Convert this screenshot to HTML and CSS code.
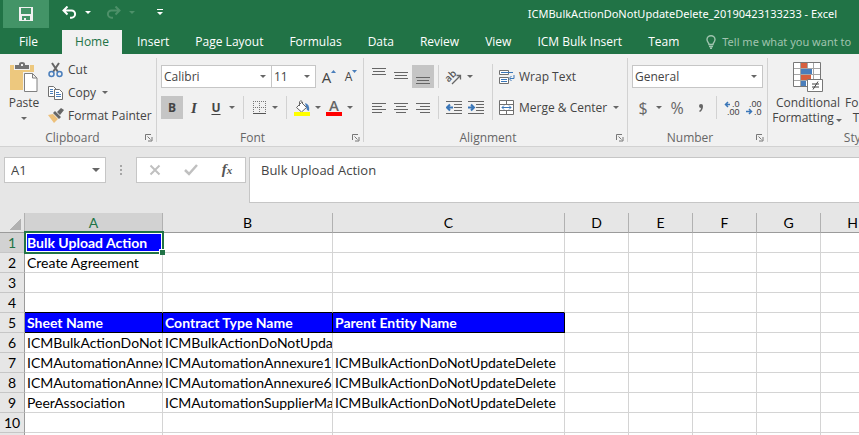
FILE: index.html
```
<!DOCTYPE html>
<html lang="en">
<head>
    <meta charset="UTF-8">
    <meta name="viewport" content="width=device-width, initial-scale=1.0">
    <title>ICMBulkActionDoNotUpdateDelete_20190423133233 - Excel</title>
    <link rel="stylesheet" href="styles.css">
</head>

<body>
<svg class="sprite" width="0" height="0" aria-hidden="true">
    <symbol id="launcher" viewBox="0 0 8 8">
        <path d="M0.5 6V0.5H6M2.5 2.5l3 3M7 3v4H3" fill="none" stroke="#777"/>
    </symbol>
</svg>

<header class="titlebar">
    <div class="quick">
        <button class="quick__save" aria-label="Save">
            <svg width="14" height="14" viewBox="0 0 14 14"><path fill="#f1f1f1" fill-rule="evenodd" d="M0 0h14v14H0zM2 1v6h10V1zM3 9v4h2v-2h2v2h4V9z"/></svg>
        </button>
        <button class="quick__undo" aria-label="Undo">
            <svg width="15" height="13" viewBox="0 0 15 13"><path d="M1.500 4.500H9.500a3.500 3.500 0 0 1 0 7.200H8M5.500 0.500L1.500 4.500l4 4" fill="none" stroke="#fff" stroke-width="2"/></svg>
        </button>
        <button class="arrow arrow--light" aria-label="Undo list"></button>
        <button class="quick__undo" aria-label="Redo" disabled>
            <svg width="15" height="13" viewBox="0 0 15 13"><path d="M13.500 4.500H5.500a3.500 3.500 0 0 0 0 7.200H7M9.500 0.500l4 4l-4 4" fill="none" stroke="#4d9069" stroke-width="2"/></svg>
        </button>
        <button class="arrow arrow--dim" aria-label="Redo list" disabled></button>
        <button class="quick__more" aria-label="Customize toolbar">
            <svg width="6" height="7" viewBox="0 0 6 7"><path fill="#fff" d="M0 0h6v1H0zM0 3h6L3 6z"/></svg>
        </button>
    </div>
    <div class="titlebar__name">ICMBulkActionDoNotUpdateDelete_20190423133233 - Excel</div>
</header>

<nav class="tabs">
    <a class="tab tab--file" href="#">File</a>
    <a class="tab tab--active" href="#">Home</a>
    <a class="tab" href="#">Insert</a>
    <a class="tab" href="#">Page Layout</a>
    <a class="tab" href="#">Formulas</a>
    <a class="tab" href="#">Data</a>
    <a class="tab" href="#">Review</a>
    <a class="tab" href="#">View</a>
    <a class="tab" href="#">ICM Bulk Insert</a>
    <a class="tab" href="#">Team</a>
    <a class="tell" href="#">
        <svg width="10" height="14" viewBox="0 0 10 14"><path d="M3 9.500C3 7.500 1 7 1 4.500a4 3.700 0 0 1 8 0C9 7 7 7.500 7 9.500zM3 11.500h4M4 13.300h2" fill="none" stroke="#a0c4af" stroke-width="1.400"/></svg>
        <span>Tell me what you want to</span>
    </a>
</nav>

<div class="ribbon">
    <section class="group group--clipboard">
        <div class="group__body">
            <button class="big">
                <svg width="28" height="30" viewBox="0 0 28 30">
                    <path fill="#edc87e" d="M0 3h24v25H0z"/>
                    <path fill="#f1f1f1" d="M4 2h16v6H4z"/>
                    <path fill="#737373" d="M5 3h4V2q0-2 3-2t3 2v1h4v4H5zM11 2v2h2V2z" fill-rule="evenodd"/>
                    <path fill="#f1f1f1" d="M13 10h15v20H13z"/>
                    <path d="M14.500 11.500h8l4.500 4.500v13.500H14.500zM22.500 11.500V16H27" fill="#fff" stroke="#808080"/>
                </svg>
                <span>Paste</span>
                <i class="arrow"></i>
            </button>
            <div class="stack">
                <button class="item">
                    <svg width="16" height="16" viewBox="0 0 16 16">
                        <path d="M4 1l6 9M11 1L5 10" fill="none" stroke="#666" stroke-width="2"/>
                        <circle cx="3.500" cy="12" r="2.500" fill="none" stroke="#4a7ebb" stroke-width="1.500"/>
                        <circle cx="11.500" cy="12" r="2.500" fill="none" stroke="#4a7ebb" stroke-width="1.500"/>
                    </svg>
                    Cut
                </button>
                <button class="item">
                    <svg width="16" height="16" viewBox="0 0 16 16">
                        <path d="M0.500 1.500h5l3 3v7h-8z" fill="#fff" stroke="#707070"/>
                        <path d="M6.500 4.500h5l3 3v7h-8z" fill="#fff" stroke="#707070"/>
                        <path d="M2 4.500h3M2 6.500h3M2 8.500h3M8 7.500h3M8 9.500h5M8 11.500h5" stroke="#4a7ebb"/>
                    </svg>
                    Copy
                    <i class="arrow"></i>
                </button>
                <button class="item">
                    <svg width="16" height="16" viewBox="0 0 16 16">
                        <path fill="#edc07a" d="M0 7l5-1 5 5-4 4z"/>
                        <path fill="#666" d="M5 5l2-2 6 6-2 2zM9 4l4-4 3 2-4 5z"/>
                    </svg>
                    Format Painter
                </button>
            </div>
        </div>
        <h2 class="group__label">Clipboard</h2>
        <button class="launcher" aria-label="Clipboard settings"><svg width="8" height="8"><use href="#launcher"/></svg></button>
    </section>

    <section class="group group--font">
        <div class="group__body group__body--rows">
            <div class="row">
                <label class="pick pick--font"><select aria-label="Font"><option>Calibri</option></select><i class="arrow"></i></label>
                <label class="pick pick--size"><select aria-label="Font size"><option>11</option></select><i class="arrow"></i></label>
                <button class="tool" aria-label="Increase font size">
                    <span class="grow">A</span><svg width="5" height="14" viewBox="0 0 5 14"><path fill="#4a7ebb" d="M0 3L2.500 0L5 3z"/></svg>
                </button>
                <button class="tool" aria-label="Decrease font size">
                    <span class="shrink">A</span><svg width="5" height="14" viewBox="0 0 5 14"><path fill="#4a7ebb" d="M0 0h5L2.500 3z"/></svg>
                </button>
            </div>
            <div class="row">
                <button class="tool tool--on"><b>B</b></button>
                <button class="tool tool--italic">I</button>
                <button class="tool"><b class="underlined">U</b></button>
                <button class="arrow" aria-label="Underline styles"></button>
                <i class="sep"></i>
                <button class="tool" aria-label="Borders">
                    <svg width="13" height="13" viewBox="0 0 13 13"><path d="M0 0.500h13M0 6.500h13M0.500 0v12M6.500 0v12M12.500 0v12" fill="none" stroke="#777" stroke-dasharray="1 1"/><path d="M0 12.500h13" stroke="#555"/></svg>
                </button>
                <button class="arrow" aria-label="Border styles"></button>
                <i class="sep"></i>
                <button class="tool" aria-label="Fill color">
                    <svg width="16" height="16" viewBox="0 0 16 16"><path fill="#4a7ebb" d="M11 3q5 1 4 8l-2-1z"/><path d="M2.500 7.500l5-5 5 5-5 4.500zM5.500 6V2q1-3 3 0v2" fill="#fff" stroke="#666"/><path fill="#ff0" d="M0 12h16v4H0z"/></svg>
                </button>
                <button class="arrow" aria-label="Fill colors"></button>
                <button class="tool" aria-label="Font color"><span class="fontcolor">A</span></button>
                <button class="arrow" aria-label="Font colors"></button>
            </div>
        </div>
        <h2 class="group__label">Font</h2>
        <button class="launcher" aria-label="Font settings"><svg width="8" height="8"><use href="#launcher"/></svg></button>
    </section>

    <section class="group group--alignment">
        <div class="group__body">
            <div class="align">
                <div class="row">
                    <button class="tool" aria-label="Top align"><svg width="14" height="23" viewBox="0 0 14 23"><path d="M0 3.500h14M1 6.500h12M0 9.500h14" stroke="#666"/></svg></button>
                    <button class="tool" aria-label="Middle align"><svg width="14" height="23" viewBox="0 0 14 23"><path d="M0 7.500h14M1 10.500h12M0 13.500h14" stroke="#666"/></svg></button>
                    <button class="tool tool--on" aria-label="Bottom align"><svg width="14" height="23" viewBox="0 0 14 23"><path d="M0 12.500h14M1 15.500h12M0 18.500h14" stroke="#666"/></svg></button>
                    <i class="sep sep--even"></i>
                    <button class="tool" aria-label="Orientation">
                        <svg width="18" height="16" viewBox="0 0 18 16"><text class="ab" x="0" y="11" transform="rotate(-45 5 8)">ab</text><path d="M7 15l8-8M11.500 6.500h4v4" fill="none" stroke="#666" stroke-width="1.300"/></svg>
                    </button>
                    <button class="arrow" aria-label="Orientations"></button>
                </div>
                <div class="row">
                    <button class="tool" aria-label="Align left"><svg width="14" height="12" viewBox="0 0 14 12"><path d="M0 1.500h14M0 4.500h10M0 7.500h14M0 10.500h10" stroke="#666"/></svg></button>
                    <button class="tool" aria-label="Center"><svg width="14" height="12" viewBox="0 0 14 12"><path d="M0 1.500h14M2 4.500h10M0 7.500h14M2 10.500h10" stroke="#666"/></svg></button>
                    <button class="tool" aria-label="Align right"><svg width="14" height="12" viewBox="0 0 14 12"><path d="M0 1.500h14M4 4.500h10M0 7.500h14M4 10.500h10" stroke="#666"/></svg></button>
                    <i class="sep sep--even"></i>
                    <button class="tool" aria-label="Decrease indent"><svg width="16" height="14" viewBox="0 0 16 14"><path d="M0 0.500h16M8 3.500h8M8 6.500h8M8 9.500h8M0 12.500h16" stroke="#666"/><path d="M1 6.500h6M4 3.500l-3 3 3 3" fill="none" stroke="#3a76b8" stroke-width="2"/></svg></button>
                    <button class="tool" aria-label="Increase indent"><svg width="16" height="14" viewBox="0 0 16 14"><path d="M0 0.500h16M8 3.500h8M8 6.500h8M8 9.500h8M0 12.500h16" stroke="#666"/><path d="M0 6.500h6M3 3.500l3 3-3 3" fill="none" stroke="#3a76b8" stroke-width="2"/></svg></button>
                </div>
            </div>
            <div class="wrapping">
                <button class="item">
                    <svg width="16" height="16" viewBox="0 0 16 16"><path d="M0.500 1.500h9v4h-9zM0.500 8.500h9v6h-9z" fill="#fff" stroke="#707070"/><path d="M2 3.500h12M2 10.500h6M2 12.500h6M15 6v3.500h-4M12.500 7l-2.500 2.500 2.500 2.500" fill="none" stroke="#3a76b8"/></svg>
                    Wrap Text
                </button>
                <button class="item">
                    <svg width="16" height="16" viewBox="0 0 16 16"><path d="M0.500 0.500h14v14h-14zM0.500 4.500h14M0.500 10.500h14M7.500 0v4M7.500 11v4" fill="#fff" stroke="#707070"/><path d="M3 7.500h9M5 5.500l-2 2 2 2M10 5.500l2 2-2 2" fill="none" stroke="#3a76b8"/></svg>
                    Merge &amp; Center
                    <i class="arrow"></i>
                </button>
            </div>
        </div>
        <h2 class="group__label">Alignment</h2>
        <button class="launcher" aria-label="Alignment settings"><svg width="8" height="8"><use href="#launcher"/></svg></button>
    </section>

    <section class="group group--number">
        <div class="group__body group__body--rows">
            <div class="row">
                <label class="pick pick--format"><select aria-label="Number format"><option>General</option></select><i class="arrow"></i></label>
            </div>
            <div class="row">
                <button class="tool tool--sign">$</button>
                <button class="arrow" aria-label="Currencies"></button>
                <button class="tool tool--sign tool--percent">%</button>
                <button class="tool" aria-label="Comma style"><svg width="6" height="8" viewBox="0 0 6 8"><path fill="#666" d="M1 2a2 2 0 0 1 4 0q0 4-3 6l-1-1q2-1 2-3Q1 4 1 2z"/></svg></button>
                <i class="sep sep--even"></i>
                <button class="tool decimals" aria-label="Increase decimal">
                    <svg width="16" height="16" viewBox="0 0 16 16"><path d="M1 4.500h5M4 2L1.500 4.500L4 7" fill="none" stroke="#3a76b8" stroke-width="1.500"/><text x="8" y="7">.0</text><text x="3" y="15">.00</text></svg>
                </button>
                <button class="tool decimals" aria-label="Decrease decimal">
                    <svg width="16" height="16" viewBox="0 0 16 16"><path d="M0 11.500h5M3 9l2.500 2.500L3 14" fill="none" stroke="#3a76b8" stroke-width="1.500"/><text x="3" y="7">.00</text><text x="8" y="15">.0</text></svg>
                </button>
            </div>
        </div>
        <h2 class="group__label">Number</h2>
        <button class="launcher" aria-label="Number settings"><svg width="8" height="8"><use href="#launcher"/></svg></button>
    </section>

    <section class="group group--styles">
        <div class="group__body">
            <button class="big big--conditional">
                <svg width="30" height="30" viewBox="0 0 30 30">
                    <path fill="#fff" d="M0 0h28v25H0z"/>
                    <path fill="#d65f3e" d="M8 1h6v5H8zM8 13h10v5H8z"/>
                    <path fill="#4a7ebb" d="M8 7h11v5H8zM8 19h5v5H8z"/>
                    <path d="M7.500 0v25M14.500 0v7M14.500 18v7M20.500 0v25M0 6.500h28M0 12.500h28M0 18.500h28" stroke="#a6a6a6" fill="none"/>
                    <path d="M0.500 0.500h27v24h-27z" stroke="#777" fill="none"/>
                    <path d="M14.500 17.500h15v12h-15z" fill="#fff" stroke="#777"/>
                    <path d="M19 22h7M19 25h7M25 19.500l-5 8" stroke="#444" fill="none"/>
                </svg>
                <span>Conditional<br>Formatting<i class="arrow"></i></span>
            </button>
            <button class="big big--table">
                <span>Format as<br>Table<i class="arrow"></i></span>
            </button>
        </div>
        <h2 class="group__label">Styles</h2>
    </section>
</div>

<div class="formula">
    <label class="namebox"><input type="text" value="A1" aria-label="Name box"><i class="arrow"></i></label>
    <i class="grip"></i>
    <div class="formula__buttons">
        <button aria-label="Cancel"><svg width="12" height="12" viewBox="0 0 12 12"><path d="M1.500 1.500l9 9M10.500 1.500l-9 9" stroke="#c0c0c0" stroke-width="2"/></svg></button>
        <button aria-label="Enter"><svg width="14" height="12" viewBox="0 0 14 12"><path d="M1 6l4 4 8-9" fill="none" stroke="#c0c0c0" stroke-width="2.500"/></svg></button>
        <button class="fx" aria-label="Insert function">f<sub>x</sub></button>
    </div>
    <textarea class="formula__text" aria-label="Formula bar">Bulk Upload Action</textarea>
</div>

<table class="sheet">
    <colgroup>
        <col class="col-head"><col class="col-a"><col class="col-b"><col class="col-c">
        <col class="col"><col class="col"><col class="col"><col class="col"><col class="col">
    </colgroup>
    <thead>
    <tr><th class="corner"></th><th class="is-selected">A</th><th>B</th><th>C</th><th>D</th><th>E</th><th>F</th><th>G</th><th>H</th></tr>
    </thead>
    <tbody>
    <tr><th class="is-selected">1</th><td class="filled current">Bulk Upload Action</td><td></td><td></td><td></td><td></td><td></td><td></td><td></td></tr>
    <tr><th>2</th><td>Create Agreement</td><td></td><td></td><td></td><td></td><td></td><td></td><td></td></tr>
    <tr><th>3</th><td></td><td></td><td></td><td></td><td></td><td></td><td></td><td></td></tr>
    <tr class="above"><th>4</th><td></td><td></td><td></td><td></td><td></td><td></td><td></td><td></td></tr>
    <tr><th>5</th><td class="filled boxed">Sheet Name</td><td class="filled boxed">Contract Type Name</td><td class="filled boxed">Parent Entity Name</td><td></td><td></td><td></td><td></td><td></td></tr>
    <tr><th>6</th><td>ICMBulkActionDoNotU</td><td>ICMBulkActionDoNotUpdat</td><td></td><td></td><td></td><td></td><td></td><td></td></tr>
    <tr><th>7</th><td>ICMAutomationAnnex</td><td>ICMAutomationAnnexure1_</td><td>ICMBulkActionDoNotUpdateDelete</td><td></td><td></td><td></td><td></td><td></td></tr>
    <tr><th>8</th><td>ICMAutomationAnnex</td><td>ICMAutomationAnnexure6_</td><td>ICMBulkActionDoNotUpdateDelete</td><td></td><td></td><td></td><td></td><td></td></tr>
    <tr><th>9</th><td>PeerAssociation</td><td>ICMAutomationSupplierMa</td><td>ICMBulkActionDoNotUpdateDelete</td><td></td><td></td><td></td><td></td><td></td></tr>
    <tr><th>10</th><td></td><td></td><td></td><td></td><td></td><td></td><td></td><td></td></tr>
    <tr><th></th><td></td><td></td><td></td><td></td><td></td><td></td><td></td><td></td></tr>
    </tbody>
</table>
</body>
</html>
```
FILE: styles.css
```
*,
*::before,
*::after {
    box-sizing: border-box;
}

body {
    margin: 0;
    height: 100vh;
    overflow: hidden;
    background-color: #e6e6e6;
    color: #444;
    font-family: "Open Sans", sans-serif;
    font-size: 12px;
    line-height: 16px;
}

button,
select,
input,
textarea {
    margin: 0;
    padding: 0;
    border: 0;
    border-radius: 0;
    background: none;
    color: inherit;
    font: inherit;
}

a {
    color: inherit;
    text-decoration: none;
}

svg {
    display: block;
    flex: none;
}

.sprite {
    position: absolute;
}

/* small drop-down triangle */
.arrow {
    display: flex;
    flex: none;
    align-items: center;
    justify-content: center;
    width: 10px;
    color: #666;
}

.arrow::before {
    content: "";
    border: 3px solid transparent;
    border-top-color: currentColor;
    border-bottom: 0;
}

.arrow--light {
    color: #fff;
}

.arrow--dim {
    color: #4d9069;
}

/* title bar */
.titlebar {
    display: flex;
    justify-content: space-between;
    height: 28px;
    padding: 0 22px 0 3px;
    background-color: #217346;
    color: #fff;
}

.titlebar__name {
    font-family: "Noto Sans", sans-serif;
    font-size: 11px;
    line-height: 28px;
    white-space: nowrap;
}

.quick {
    display: flex;
}

.quick button {
    display: flex;
    align-items: center;
    justify-content: center;
    height: 24px;
}

.quick .quick__save {
    width: 46px;
    height: 28px;
    background-color: #439467;
}

.quick__undo {
    width: 28px;
    margin-left: 6px;
}

.quick__more {
    width: 46px;
}

/* tabs */
.tabs {
    display: flex;
    height: 26px;
    padding-top: 2px;
    overflow: hidden;
    background-color: #217346;
    color: #fff;
    line-height: 24px;
    white-space: nowrap;
}

.tab {
    flex: none;
    padding: 0 13px;
}

.tab--file {
    width: 62px;
    padding: 0 0 0 19px;
}

.tab--active {
    width: 60px;
    margin-right: 2px;
    padding: 0;
    background-color: #f1f1f1;
    color: #217346;
    text-align: center;
}

.tell {
    display: flex;
    flex: none;
    align-items: center;
    gap: 6px;
    padding-left: 14px;
    color: #a0c4af;
    font-family: "Noto Sans", sans-serif;
    font-size: 11px;
}

/* ribbon */
.ribbon {
    display: flex;
    overflow: hidden;
    border-bottom: 1px solid #d2d2d2;
    background-color: #f1f1f1;
}

.group {
    position: relative;
    flex: none;
    padding-top: 4px;
}

.group::after {
    content: "";
    position: absolute;
    top: 4px;
    right: 0;
    bottom: 4px;
    border-right: 1px solid #d2d2d2;
}

.group__body {
    display: flex;
    height: 72px;
}

.group__body--rows,
.align,
.wrapping {
    display: flex;
    flex-direction: column;
    gap: 8px;
    padding-top: 7px;
}

.group__label {
    margin: 0;
    color: #666;
    font-size: 12px;
    font-weight: 400;
    line-height: 16px;
    text-align: center;
}

.group--clipboard {
    width: 157px;
    padding-right: 18px;
    padding-left: 6px;
}

.group--font {
    width: 207px;
    padding-left: 4px;
}

.group--font .group__label,
.group--alignment .group__label,
.group--number .group__label {
    padding-right: 20px;
}

.group--alignment {
    width: 264px;
    padding-left: 4px;
}

.group--number {
    width: 140px;
    padding-left: 4px;
}

.group--styles {
    width: 180px;
    padding-left: 4px;
}

.launcher {
    position: absolute;
    right: 4px;
    bottom: 4px;
}

.row {
    display: flex;
    height: 23px;
}

.tool {
    display: flex;
    flex: none;
    align-items: center;
    justify-content: center;
    width: 22px;
    height: 23px;
}

.tool--on {
    background-color: #c5c5c5;
}

.tool--italic {
    font-family: "Liberation Serif", serif;
    font-size: 15px;
    font-style: italic;
    font-weight: 700;
}

.tool--sign {
    color: #666;
    font-size: 16px;
}

.tool--percent {
    width: 26px;
}

.underlined {
    text-decoration: underline;
    text-underline-offset: 2px;
}

.grow {
    font-size: 15px;
}

.shrink {
    font-size: 12px;
}

.fontcolor {
    width: 16px;
    border-bottom: 4px solid #f00;
    color: #666;
    font-size: 15px;
    font-weight: 600;
    line-height: 13px;
}

.ab {
    fill: #555;
    font-size: 10px;
    font-weight: 600;
}

.decimals text {
    fill: #444;
    font-family: "Liberation Sans", sans-serif;
    font-size: 9px;
}

.sep {
    flex: none;
    width: 1px;
    margin: 0 4px 0 6px;
    background-color: #d2d2d2;
}

.sep--even {
    margin: 0 4px;
}

.item {
    display: flex;
    align-items: center;
    gap: 4px;
    height: 23px;
    white-space: nowrap;
}

.big {
    display: flex;
    flex: none;
    flex-direction: column;
    align-items: center;
    width: 36px;
    padding-top: 4px;
}

.big > svg {
    margin-bottom: 3px;
}

.big .arrow {
    height: 14px;
}

.big span .arrow {
    display: inline-flex;
    height: 8px;
}

.big--conditional,
.big--table {
    line-height: 15px;
    white-space: nowrap;
}

.big--conditional {
    width: 72px;
}

.big--table {
    width: 58px;
    padding-top: 37px;
}

.stack {
    padding-left: 6px;
}

.align {
    width: 124px;
}

.wrapping {
    position: relative;
    padding-left: 7px;
}

.wrapping::before {
    content: "";
    position: absolute;
    top: 6px;
    bottom: 10px;
    left: 0;
    border-left: 1px solid #d2d2d2;
}

.pick,
.namebox {
    display: flex;
    flex: none;
    height: 23px;
    padding-right: 3px;
    border: 1px solid #c6c6c6;
    background-color: #fff;
}

.pick select {
    flex: 1;
    min-width: 0;
    padding-left: 2px;
    appearance: none;
}

.pick--font {
    width: 111px;
}

.pick--size {
    width: 44px;
    margin-right: 2px;
    border-left: 0;
}

.pick--format {
    width: 131px;
}

/* formula bar */
.formula {
    display: flex;
    padding: 10px 0 10px 4px;
    font-size: 13px;
}

.namebox {
    width: 102px;
    height: 26px;
    padding-right: 4px;
}

.namebox .arrow::before {
    border-width: 4px;
    border-bottom: 0;
}

.namebox input {
    flex: 1;
    min-width: 0;
    padding-left: 6px;
}

.grip {
    width: 2px;
    height: 10px;
    margin: 8px 14px;
    background: repeating-linear-gradient(#a6a6a6 0 2px, transparent 2px 4px);
}

.formula__buttons {
    display: flex;
    flex: none;
    width: 110px;
    height: 26px;
    border: 1px solid #c6c6c6;
    background-color: #fff;
}

.formula__buttons button {
    display: flex;
    flex: 1;
    align-items: center;
    justify-content: center;
}

.formula__buttons .fx {
    align-items: baseline;
    color: #555;
    font-family: "Liberation Serif", serif;
    font-size: 15px;
    font-style: italic;
    font-weight: 700;
    line-height: 22px;
}

.fx sub {
    font-size: 11px;
    line-height: 0;
}

.formula__text {
    flex: 1;
    height: 46px;
    margin-left: 3px;
    padding: 4px 11px;
    border: 1px solid #c6c6c6;
    border-right: 0;
    background-color: #fff;
    resize: none;
}

/* worksheet */
.sheet {
    width: 885px;
    border-spacing: 0;
    table-layout: fixed;
    background-color: #fff;
    color: #000;
    font-family: Lato, sans-serif;
    font-size: 14px;
    line-height: 19px;
}

.col-head {
    width: 25px;
}

.col-a {
    width: 138px;
}

.col-b {
    width: 170px;
}

.col-c {
    width: 232px;
}

.col {
    width: 64px;
}

.sheet th {
    height: 20px;
    padding: 0;
    border-right: 1px solid #9b9b9b;
    border-bottom: 1px solid #c6c6c6;
    background-color: #e6e6e6;
    font-weight: 400;
}

.sheet thead th {
    border-right-color: #b1b1b1;
    border-bottom-color: #9b9b9b;
}

.sheet th.is-selected {
    background-color: #d2d2d2;
    color: #217346;
}

.sheet .corner {
    background: linear-gradient(135deg, transparent 50%, #b1b1b1 50%) 9px 5px / 12px 12px no-repeat #e6e6e6;
}

.sheet td {
    height: 20px;
    padding: 0 0 0 2px;
    overflow: hidden;
    border-right: 1px solid #d4d4d4;
    border-bottom: 1px solid #d4d4d4;
    white-space: nowrap;
}

.sheet .filled {
    background-color: #00f;
    color: #fff;
    font-weight: 700;
}

.sheet .boxed {
    border-color: #000;
}

.above td:nth-child(-n + 4) {
    border-bottom-color: #000;
}

/* selection frame and fill handle */
.sheet .current {
    position: relative;
    overflow: visible;
}

.current::before {
    content: "";
    position: absolute;
    inset: -2px -2px -2px -1px;
    border: 2px solid #217346;
    box-shadow: inset 0 0 0 1px #fff;
}

.current::after {
    content: "";
    position: absolute;
    right: -3px;
    bottom: -3px;
    width: 6px;
    height: 6px;
    border: 1px solid #fff;
    border-right: 0;
    border-bottom: 0;
    background-color: #217346;
}
```
